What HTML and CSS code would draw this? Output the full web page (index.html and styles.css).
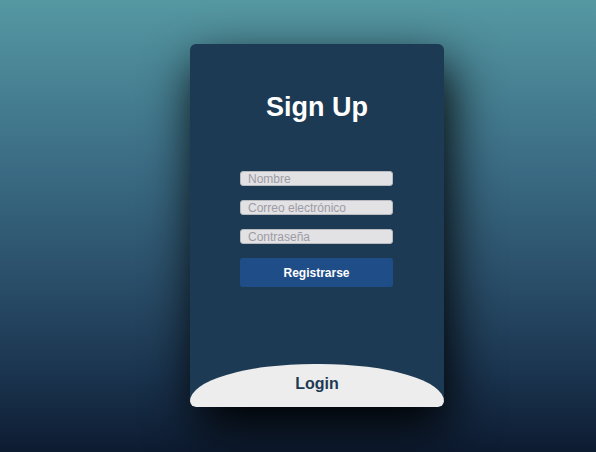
FILE: index.html
```html
<!DOCTYPE html>
<html>
<head>
<meta charset="utf-8">
<link rel="stylesheet" href="styles.css">
</head>
<body>
<div class="page">
  <div class="card">
    <form class="signup">
      <h1 class="title">Sign Up</h1>
      <div class="fields">
        <input class="field" type="text" placeholder="Nombre">
        <input class="field" type="email" placeholder="Correo electrónico">
        <input class="field" type="password" placeholder="Contraseña">
        <button class="btn" type="button">Registrarse</button>
      </div>
    </form>
    <div class="login"><span class="login-label">Login</span></div>
  </div>
</div>
</body>
</html>
```
FILE: styles.css
```css
html, body {
  margin: 0;
  height: 100%;
}
body {
  font-family: "Liberation Sans", Arial, sans-serif;
  background: linear-gradient(to bottom, #5598a2 0%, #3c6e86 35%, #2a4e69 62%, #1b3550 82%, #0d1b31 100%);
}
.page {
  height: 452px;
  display: flex;
  align-items: flex-start;
  justify-content: center;
  padding: 44px 0 0 38px;
  box-sizing: border-box;
}
.card {
  width: 254px;
  height: 363px;
  background: #1d3a54;
  border-radius: 6px;
  overflow: hidden;
  box-shadow: 5px 20px 50px #000;
  display: flex;
  flex-direction: column;
}
.signup {
  flex: 1;
  display: flex;
  flex-direction: column;
  align-items: center;
}
.title {
  margin: 48px 0 0;
  font-size: 27px;
  line-height: 31px;
  font-weight: bold;
  color: #fff;
}
.fields {
  margin-top: 48px;
  width: 153px;
  align-self: flex-start;
  margin-left: 50px;
  display: flex;
  flex-direction: column;
  gap: 14px;
}
.field {
  box-sizing: border-box;
  height: 15px;
  width: 100%;
  margin: 0;
  padding: 0 7px;
  border: 1px solid #b9bac0;
  border-radius: 3px;
  background: #e2e1e3;
  font-family: "Liberation Sans", Arial, sans-serif;
  font-size: 12px;
  outline: none;
}
.field::placeholder {
  color: #9d9ca6;
}
.btn {
  height: 29px;
  width: 100%;
  border: none;
  border-radius: 3px;
  background: #1f4d88;
  color: #fff;
  font-family: "Liberation Sans", Arial, sans-serif;
  font-size: 12px;
  font-weight: bold;
}
.login {
  height: 43px;
  background: #ededed;
  border-radius: 127px 127px 6px 6px / 38px 38px 6px 6px;
  display: flex;
  justify-content: center;
  padding-top: 10px;
  box-sizing: border-box;
}
.login-label {
  font-size: 16px;
  font-weight: bold;
  color: #1d3a54;
  line-height: 19px;
}
```
